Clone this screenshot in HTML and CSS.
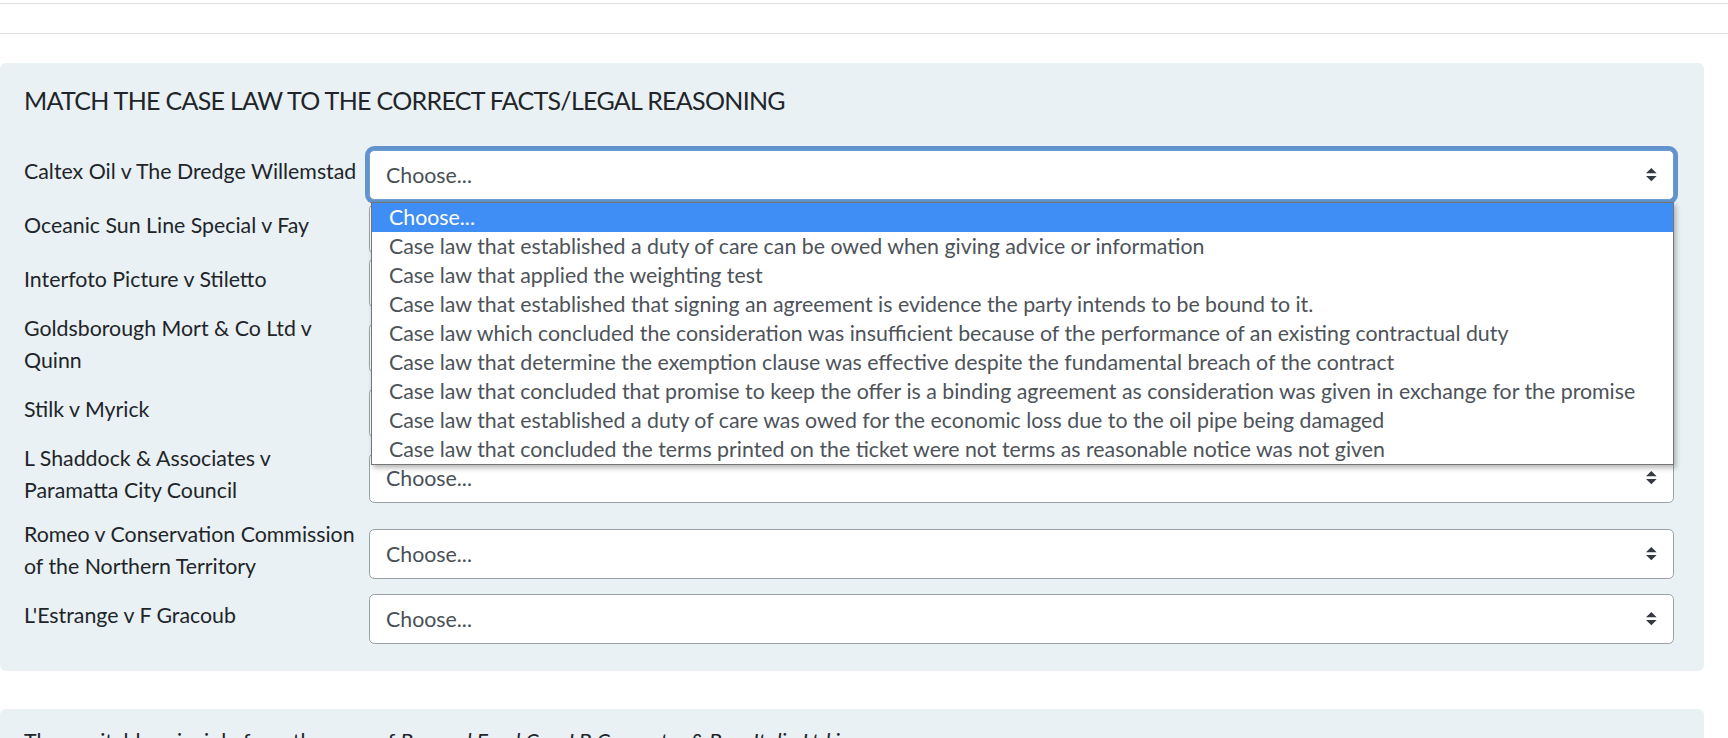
FILE: index.html
```html
<!DOCTYPE html>
<html lang="en">
<head>
<meta charset="utf-8">
<title>Match the case law</title>
<link rel="stylesheet" href="styles.css">
</head>
<body>
<div class="topbar"></div>

<section class="card">
  <h5 class="card-title">MATCH THE CASE LAW TO THE CORRECT FACTS/LEGAL REASONING</h5>
  <div class="match-grid">
    <label class="case-label">Caltex Oil v The Dredge Willemstad</label>
    <div class="select-cell">
      <div class="select focused"><span>Choose...</span><svg class="arrow" viewBox="0 0 4 5"><path d="M2 0L0 2h4zm0 5L0 3h4z"/></svg></div>
      <ul class="dropdown">
        <li class="active">Choose...</li>
        <li>Case law that established a duty of care can be owed when giving advice or information</li>
        <li>Case law that applied the weighting test</li>
        <li>Case law that established that signing an agreement is evidence the party intends to be bound to it.</li>
        <li>Case law which concluded the consideration was insufficient because of the performance of an existing contractual duty</li>
        <li>Case law that determine the exemption clause was effective despite the fundamental breach of the contract</li>
        <li>Case law that concluded that promise to keep the offer is a binding agreement as consideration was given in exchange for the promise</li>
        <li>Case law that established a duty of care was owed for the economic loss due to the oil pipe being damaged</li>
        <li>Case law that concluded the terms printed on the ticket were not terms as reasonable notice was not given</li>
      </ul>
    </div>

    <label class="case-label">Oceanic Sun Line Special v Fay</label>
    <div class="select-cell"><div class="select"><span>Choose...</span><svg class="arrow" viewBox="0 0 4 5"><path d="M2 0L0 2h4zm0 5L0 3h4z"/></svg></div></div>

    <label class="case-label">Interfoto Picture v Stiletto</label>
    <div class="select-cell"><div class="select"><span>Choose...</span><svg class="arrow" viewBox="0 0 4 5"><path d="M2 0L0 2h4zm0 5L0 3h4z"/></svg></div></div>

    <label class="case-label">Goldsborough Mort &amp; Co Ltd v Quinn</label>
    <div class="select-cell"><div class="select"><span>Choose...</span><svg class="arrow" viewBox="0 0 4 5"><path d="M2 0L0 2h4zm0 5L0 3h4z"/></svg></div></div>

    <label class="case-label">Stilk v Myrick</label>
    <div class="select-cell"><div class="select"><span>Choose...</span><svg class="arrow" viewBox="0 0 4 5"><path d="M2 0L0 2h4zm0 5L0 3h4z"/></svg></div></div>

    <label class="case-label">L Shaddock &amp; Associates v Paramatta City Council</label>
    <div class="select-cell"><div class="select"><span>Choose...</span><svg class="arrow" viewBox="0 0 4 5"><path d="M2 0L0 2h4zm0 5L0 3h4z"/></svg></div></div>

    <label class="case-label">Romeo v Conservation Commission of the Northern Territory</label>
    <div class="select-cell"><div class="select"><span>Choose...</span><svg class="arrow" viewBox="0 0 4 5"><path d="M2 0L0 2h4zm0 5L0 3h4z"/></svg></div></div>

    <label class="case-label">L'Estrange v F Gracoub</label>
    <div class="select-cell"><div class="select"><span>Choose...</span><svg class="arrow" viewBox="0 0 4 5"><path d="M2 0L0 2h4zm0 5L0 3h4z"/></svg></div></div>
  </div>
</section>

<section class="card card-next">
  <p class="card-text">The equitable principle from the case of <em>Barnard Food Co v LB Carpenter &amp; Bros Italia Ltd</em> is</p>
</section>
</body>
</html>
```

FILE: styles.css
```css
* {
  box-sizing: border-box;
}

html,
body {
  margin: 0;
  padding: 0;
}

body {
  width: 1728px;
  height: 738px;
  overflow: hidden;
  background: #ffffff;
  font-family: Lato, "Open Sans", sans-serif;
  font-size: 21.33px;
  line-height: 32px;
  color: #212529;
}

.topbar {
  margin-top: 3px;
  height: 31px;
  border-top: 1px solid #dee2e6;
  border-bottom: 1px solid #dee2e6;
}

.card {
  margin: 29px 24px 0 0;
  background: #e9f1f4;
  border-radius: 6px;
  padding: 21px 30px 27px 24px;
}

.card-title {
  margin: 0 0 32.4px;
  font-size: 25px;
  line-height: 33.6px;
  letter-spacing: -0.7px;
  font-weight: 400;
  color: #212529;
}

.match-grid {
  display: grid;
  grid-template-columns: 341px 1fr;
  column-gap: 4px;
  row-gap: 4px;
  align-items: center;
}

.case-label {
  display: block;
  margin-bottom: 8px;
  line-height: 32px;
}

.select-cell {
  position: relative;
}

.select {
  height: 50px;
  display: flex;
  align-items: center;
  justify-content: space-between;
  padding: 8px 16px 8px 16px;
  background: #ffffff;
  border: 1px solid #9ca1a6;
  border-radius: 5.33px;
  color: #495057;
  line-height: 32px;
}

.select.focused {
  border-color: #6d9dd3;
  box-shadow: 0 0 0 4px #6194cd;
}

.arrow {
  width: 10.67px;
  height: 13.33px;
  fill: #343a40;
  flex: none;
}

.dropdown {
  position: absolute;
  top: 52px;
  left: 2px;
  right: 0;
  z-index: 10;
  margin: 0;
  padding: 0;
  list-style: none;
  background: #ffffff;
  border: 1px solid #767676;
  box-shadow: 2px 3px 5px rgba(0, 0, 0, 0.28);
}

.dropdown li {
  height: 29px;
  line-height: 29px;
  padding-left: 17px;
  color: #4d5359;
  white-space: nowrap;
}

.dropdown li.active {
  background: #3e8ef5;
  color: #ffffff;
}

.card-next {
  margin-top: 38px;
  padding-top: 16px;
}

.card-text {
  margin: 0;
}
```
